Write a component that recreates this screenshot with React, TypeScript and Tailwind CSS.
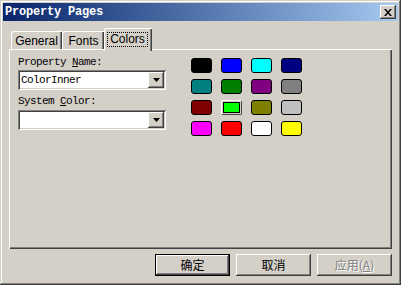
import React from "react";

const raised =
  "shadow-[inset_-1px_-1px_0_#404040,inset_1px_1px_0_#ffffff,inset_-2px_-2px_0_#808080,inset_2px_2px_0_#d4d0c8]";
const sunken =
  "shadow-[inset_1px_1px_0_#808080,inset_-1px_-1px_0_#ffffff,inset_2px_2px_0_#404040,inset_-2px_-2px_0_#d4d0c8]";

const mono = "font-['Liberation_Mono',monospace] text-[11px] tracking-[-0.6px] leading-[12px] text-black";

function Combo({ value }: { value: string }) {
  return (
    <div className={`relative w-[148px] h-[20px] bg-white flex items-center ${sunken}`}>
      <div className={`flex-1 pl-[3px] ${mono} whitespace-pre`}>{value}</div>
      <div className={`w-[16px] h-[16px] mr-[2px] bg-[#d4d0c8] flex items-center justify-center ${raised}`}>
        <svg width="7" height="4" viewBox="0 0 7 4">
          <path d="M0 0h7L3.5 4z" fill="#000" />
        </svg>
      </div>
    </div>
  );
}

export default function App() {
  const swatches = [
    "#000000", "#0000ff", "#00ffff", "#000080",
    "#008080", "#008000", "#800080", "#808080",
    "#800000", "#00ff00", "#808000", "#c0c0c0",
    "#ff00ff", "#ff0000", "#ffffff", "#ffff00",
  ];
  return (
    <div className="w-[401px] h-[285px] bg-[#d4d0c8] p-[3px] flex flex-col shadow-[inset_-1px_-1px_0_#404040,inset_1px_1px_0_#d4d0c8,inset_-2px_-2px_0_#808080,inset_2px_2px_0_#ffffff]">
      {/* Title bar */}
      <div className="h-[18px] flex items-center justify-between bg-linear-to-r from-[#0a246a] to-[#a6caf0] pl-[2px] pr-[2px]">
        <span className="font-['Liberation_Mono',monospace] font-bold text-[12px] tracking-[-0.2px] leading-[14px] text-white whitespace-pre">
          Property Pages
        </span>
        <div className={`w-[16px] h-[14px] bg-[#d4d0c8] flex items-center justify-center ${raised}`}>
          <svg width="8" height="7" viewBox="0 0 8 7">
            <path d="M0 0h2l2 2.5L6 0h2L5 3.5 8 7H6L4 4.5 2 7H0l3-3.5z" fill="#000" />
          </svg>
        </div>
      </div>

      <div className="mx-[6px] mt-[7px] flex flex-col">
        {/* Tabs */}
        <div className="h-[21px] flex items-end pl-[2px] font-['Liberation_Sans',sans-serif] text-[12px] text-black">
          <div className="w-[51px] h-[18px] border-l border-t border-white rounded-tl-[3px] shadow-[inset_-1px_0_0_#404040,inset_-2px_0_0_#808080] flex items-center justify-center pr-[1px]">
            General
          </div>
          <div className="w-[42px] h-[18px] border-l border-t border-white rounded-tl-[3px] shadow-[inset_-1px_0_0_#404040,inset_-2px_0_0_#808080] flex items-center justify-center">
            Fonts
          </div>
          <div className="relative z-10 w-[48px] h-[23px] mb-[-2px] bg-[#d4d0c8] border-l border-t border-white rounded-tl-[3px] shadow-[inset_-1px_0_0_#404040,inset_-2px_0_0_#808080] flex items-start justify-center pt-[3px] pr-[2px]">
            <span className="border border-dotted border-black px-[2px] leading-[13px]">Colors</span>
          </div>
        </div>

        {/* Panel */}
        <div className="relative h-[200px] flex pt-[7px] pl-[9px] shadow-[inset_1px_1px_0_#ffffff,inset_-1px_-1px_0_#404040,inset_-2px_-2px_0_#808080]">
          <div className="w-[148px] flex flex-col">
            <div className={`h-[12px] ${mono} whitespace-pre`}>
              Property <span className="underline underline-offset-[1px]">N</span>ame:
            </div>
            <div className="mt-[2px]">
              <Combo value="ColorInner" />
            </div>
            <div className={`mt-[5px] h-[12px] ${mono} whitespace-pre`}>
              System <span className="underline underline-offset-[1px]">C</span>olor:
            </div>
            <div className="mt-[3px]">
              <Combo value="" />
            </div>
          </div>
          <div className="ml-[25px] mt-[2px] grid grid-cols-[repeat(4,21px)] gap-x-[9px] gap-y-[6px] content-start">
            {swatches.map((c, i) =>
              i === 9 ? (
                <div
                  key={i}
                  className="w-[21px] h-[15px] rounded-[2px] border border-[#404040] border-t-white border-l-white p-[1px]"
                >
                  <div className="w-full h-full border border-black" style={{ backgroundColor: c }} />
                </div>
              ) : (
                <div
                  key={i}
                  className="w-[21px] h-[15px] rounded-[3px] border border-black"
                  style={{ backgroundColor: c }}
                />
              )
            )}
          </div>
        </div>

        {/* Buttons */}
        <div className="mt-[5px] flex justify-end gap-[6px] font-['Noto_Sans_CJK_SC',sans-serif] text-[12px] leading-[14px]">
          <div className={`w-[75px] h-[22px] border border-black flex items-center justify-center text-black ${raised}`}>
            确定
          </div>
          <div className={`w-[75px] h-[22px] flex items-center justify-center text-black ${raised}`}>
            取消
          </div>
          <div className={`w-[75px] h-[22px] flex items-center justify-center text-[#808080] [text-shadow:1px_1px_0_#ffffff] ${raised}`}>
            应用(<span className="underline underline-offset-[1px]">A</span>)
          </div>
        </div>
      </div>
    </div>
  );
}
